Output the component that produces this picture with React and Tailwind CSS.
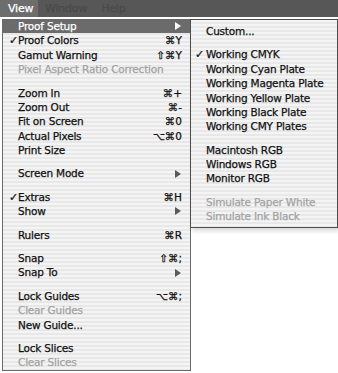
const STRIPES =
  "bg-[image:repeating-linear-gradient(to_bottom,#f4f4f4_0px,#f4f4f4_2px,#e8e8e8_2px,#e8e8e8_4px)]";

const MAIN = [
  { label: "Proof Setup", sub: true, active: true },
  { label: "Proof Colors", check: true, key: "⌘Y" },
  { label: "Gamut Warning", key: "⇧⌘Y" },
  { label: "Pixel Aspect Ratio Correction", off: true },
  "sep",
  { label: "Zoom In", key: "⌘+" },
  { label: "Zoom Out", key: "⌘-" },
  { label: "Fit on Screen", key: "⌘0" },
  { label: "Actual Pixels", key: "⌥⌘0" },
  { label: "Print Size" },
  "sep",
  { label: "Screen Mode", sub: true },
  "sep",
  { label: "Extras", check: true, key: "⌘H" },
  { label: "Show", sub: true },
  "sep",
  { label: "Rulers", key: "⌘R" },
  "sep",
  { label: "Snap", key: "⇧⌘;" },
  { label: "Snap To", sub: true },
  "sep",
  { label: "Lock Guides", key: "⌥⌘;" },
  { label: "Clear Guides", off: true },
  { label: "New Guide..." },
  "sep",
  { label: "Lock Slices" },
  { label: "Clear Slices", off: true },
];

const SUB = [
  { label: "Custom..." },
  "sep",
  { label: "Working CMYK", check: true },
  { label: "Working Cyan Plate" },
  { label: "Working Magenta Plate" },
  { label: "Working Yellow Plate" },
  { label: "Working Black Plate" },
  { label: "Working CMY Plates" },
  "sep",
  { label: "Macintosh RGB" },
  { label: "Windows RGB" },
  { label: "Monitor RGB" },
  "sep",
  { label: "Simulate Paper White", off: true },
  { label: "Simulate Ink Black", off: true },
];

function Arrow({ light }) {
  return (
    <svg width="6" height="8" viewBox="0 0 6 8">
      <polygon points="0,0 6,4 0,8" fill={light ? "#ffffff" : "#5a5a5a"} />
    </svg>
  );
}

function Row({ item, padLeft, checkLeft }) {
  if (item === "sep") return <div className="h-[9px]" />;
  const color = item.active
    ? "bg-[#6b6b6b] text-white"
    : item.off
    ? "text-[#a3a3a3]"
    : "text-[#111]";
  return (
    <div className={`relative flex items-center h-[14.4px] pr-[8px] ${padLeft} ${color}`}>
      {item.check && <span className={`absolute ${checkLeft} text-[11px]`}>✓</span>}
      <span className="flex-1 whitespace-nowrap">{item.label}</span>
      {item.key && <span className="whitespace-nowrap tracking-normal">{item.key}</span>}
      {item.sub && (
        <span className="mr-[1px]">
          <Arrow light={item.active} />
        </span>
      )}
    </div>
  );
}

export default function App() {
  return (
    <div
      className="w-[338px] h-[373px] bg-white overflow-hidden text-[10.5px] tracking-[-0.2px] leading-none [-webkit-text-stroke:0.25px]"
      style={{ fontFamily: '"DejaVu Sans", sans-serif' }}
    >
      <div className="h-[17px] bg-[#575757] flex items-center text-[11px]">
        <div className="h-full w-[38px] bg-[#6d6d6d] flex items-center pl-[8px] text-white">View</div>
        <span className="ml-[7px] text-[#4a4a4a]">Window</span>
        <span className="ml-[14px] text-[#4a4a4a]">Help</span>
      </div>
      <div className="flex items-start mt-[2px]">
        <div
          className={`ml-[2px] w-[189px] border-l border-r border-b border-[#6a6a6a] ${STRIPES}`}
        >
          {MAIN.map((item, i) => (
            <Row key={i} item={item} padLeft="pl-[15px]" checkLeft="left-[6px]" />
          ))}
        </div>
        <div
          className={`-ml-[1px] w-[148px] border border-[#4e4e4e] pt-[4px] pb-[3px] shadow-[2px_3px_4px_rgba(0,0,0,0.15)] ${STRIPES}`}
        >
          {SUB.map((item, i) => (
            <Row key={i} item={item} padLeft="pl-[15px]" checkLeft="left-[4px]" />
          ))}
        </div>
      </div>
    </div>
  );
}
